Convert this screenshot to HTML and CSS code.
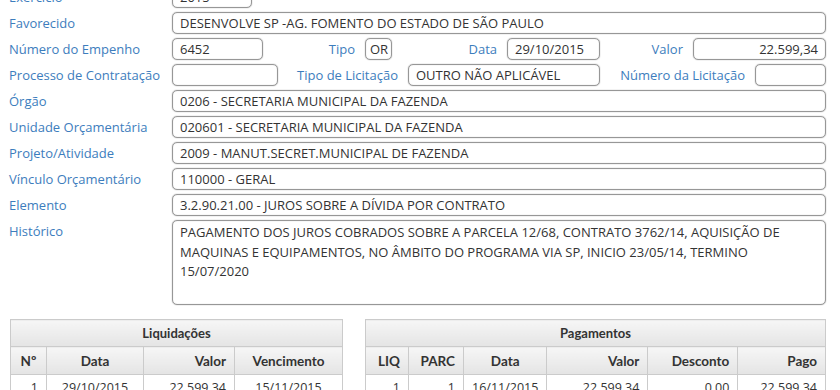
FILE: index.html
```html
<!DOCTYPE html>
<html lang="pt-BR">
<head>
    <meta charset="UTF-8">
    <title>Empenho</title>
    <link rel="stylesheet" href="styles.css">
</head>
<body>
    <div class="form">
        <div class="row">
            <label class="lbl">Exercício</label>
            <div class="box w-ano">2015</div>
        </div>
        <div class="row">
            <label class="lbl">Favorecido</label>
            <div class="box grow">DESENVOLVE SP -AG. FOMENTO DO ESTADO DE SÃO PAULO</div>
        </div>
        <div class="row">
            <label class="lbl">Número do Empenho</label>
            <div class="box w-emp">6452</div>
            <label class="lbl-in w-tipo">Tipo</label>
            <div class="box w-or">OR</div>
            <label class="lbl-in w-data">Data</label>
            <div class="box w-date">29/10/2015</div>
            <label class="lbl-in w-valor">Valor</label>
            <div class="box grow num">22.599,34</div>
        </div>
        <div class="row">
            <label class="lbl">Processo de Contratação</label>
            <div class="box w-proc"></div>
            <label class="lbl-in w-tlic">Tipo de Licitação</label>
            <div class="box w-outro">OUTRO NÃO APLICÁVEL</div>
            <label class="lbl-in w-nlic">Número da Licitação</label>
            <div class="box grow"></div>
        </div>
        <div class="row">
            <label class="lbl">Órgão</label>
            <div class="box grow">0206 - SECRETARIA MUNICIPAL DA FAZENDA</div>
        </div>
        <div class="row">
            <label class="lbl">Unidade Orçamentária</label>
            <div class="box grow">020601 - SECRETARIA MUNICIPAL DA FAZENDA</div>
        </div>
        <div class="row">
            <label class="lbl">Projeto/Atividade</label>
            <div class="box grow">2009 - MANUT.SECRET.MUNICIPAL DE FAZENDA</div>
        </div>
        <div class="row">
            <label class="lbl">Vínculo Orçamentário</label>
            <div class="box grow">110000 - GERAL</div>
        </div>
        <div class="row">
            <label class="lbl">Elemento</label>
            <div class="box grow">3.2.90.21.00 - JUROS SOBRE A DÍVIDA POR CONTRATO</div>
        </div>
        <div class="row">
            <label class="lbl">Histórico</label>
            <div class="box grow area">PAGAMENTO DOS JUROS COBRADOS SOBRE A PARCELA 12/68, CONTRATO 3762/14, AQUISIÇÃO DE MAQUINAS E EQUIPAMENTOS, NO ÂMBITO DO PROGRAMA VIA SP, INICIO 23/05/14, TERMINO 15/07/2020</div>
        </div>
    </div>

    <div class="tables">
        <table class="grid liq">
            <tr><th class="title" colspan="4">Liquidações</th></tr>
            <tr>
                <th class="c-no">Nº</th>
                <th class="c-data">Data</th>
                <th class="r c-valor">Valor</th>
                <th>Vencimento</th>
            </tr>
            <tr>
                <td class="r">1</td>
                <td>29/10/2015</td>
                <td class="r">22.599,34</td>
                <td>15/11/2015</td>
            </tr>
        </table>
        <table class="grid pag">
            <tr><th class="title" colspan="6">Pagamentos</th></tr>
            <tr>
                <th class="r c-liq">LIQ</th>
                <th class="r c-parc">PARC</th>
                <th class="c-pdata">Data</th>
                <th class="r c-pvalor">Valor</th>
                <th class="r c-desc">Desconto</th>
                <th class="r">Pago</th>
            </tr>
            <tr>
                <td class="r">1</td>
                <td class="r">1</td>
                <td>16/11/2015</td>
                <td class="r">22.599,34</td>
                <td class="r">0,00</td>
                <td class="r">22.599,34</td>
            </tr>
        </table>
    </div>
</body>
</html>
```

FILE: styles.css
```css
body {
    font-family: 'Open Sans', 'Noto Sans', sans-serif;
    font-size: 13px;
    color: #333;
    background: #fff;
    margin: 0;
    padding: 0 14px 0 9px;
}
.form {
    margin-top: -14px;
    display: flex;
    flex-direction: column;
    gap: 4px;
}
.row {
    display: flex;
    align-items: center;
}
.lbl {
    width: 163px;
    flex: none;
    color: #3d7dbd;
    white-space: nowrap;
}
.lbl-in {
    flex: none;
    color: #3d7dbd;
    text-align: right;
    white-space: nowrap;
    padding-right: 10px;
    box-sizing: border-box;
}
.box {
    flex: none;
    height: 22px;
    line-height: 20px;
    box-sizing: border-box;
    border: 1px solid #979797;
    border-radius: 5px;
    box-shadow: 0 0 1px #777, inset 0 0 1px #bbb;
    padding: 0 7px;
    white-space: nowrap;
    overflow: hidden;
}
.grow { flex: 1; }
.num { text-align: right; }
.w-ano { width: 80px; }
.w-emp { width: 91px; }
.w-tipo { width: 102px; }
.w-or { width: 27px; padding: 0 4px; }
.w-data { width: 115px; }
.w-date { width: 93px; }
.w-valor { width: 93px; }
.w-proc { width: 106px; }
.w-tlic { width: 130px; }
.w-outro { width: 192px; }
.w-nlic { width: 155px; }

.row:last-child { align-items: flex-start; }
.row:last-child .lbl { padding-top: 2px; }
.area {
    height: 85px;
    white-space: normal;
    line-height: 19.5px;
    padding-top: 2px;
}

.tables {
    display: flex;
    gap: 22px;
    margin-top: 14px;
    padding-left: 1px;
}
.grid {
    border-collapse: collapse;
    font-size: 12.5px;
}
.liq { width: 333px; }
.pag { flex: 1; }
.grid th, .grid td {
    border: 1px solid #cbcbcb;
    padding: 0 8px;
    text-align: center;
    white-space: nowrap;
}
.grid th {
    font-family: 'Lato', sans-serif;
    font-weight: bold;
    font-size: 13.5px;
    color: #333;
    height: 27px;
    background: linear-gradient(#f6f6f6, #e4e4e4);
}
.grid th.title {
    height: 26px;
    font-size: 13px;
}
.grid td {
    height: 25px;
}
.grid .r { text-align: right; }
.c-no { width: 19px; }
.c-data { width: 80px; }
.c-valor { width: 74px; }
.c-liq { width: 26px; }
.c-parc { width: 38px; }
.c-pdata { width: 66px; }
.c-pvalor { width: 84px; }
.c-desc { width: 73px; }
```
